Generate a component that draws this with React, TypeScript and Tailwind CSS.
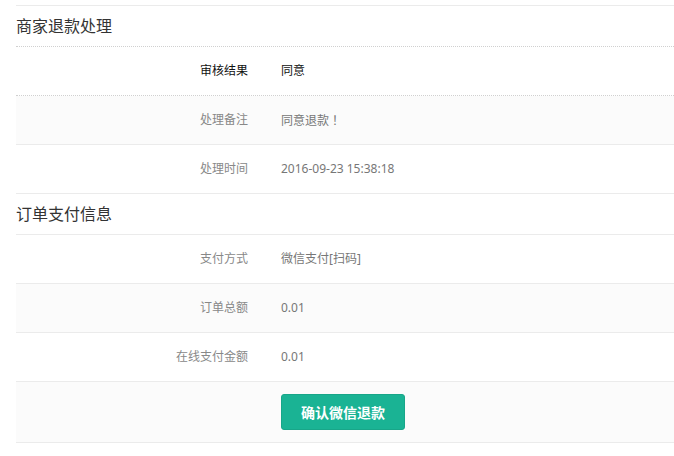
const refundRows = [
  { label: "审核结果", value: "同意", strong: true, border: "border-dotted border-[#d0d0d0]" },
  { label: "处理备注", value: "同意退款！", border: "border-solid border-[#ebebeb]" },
  { label: "处理时间", value: "2016-09-23 15:38:18", border: "border-solid border-[#ebebeb]" },
];

const payRows = [
  { label: "支付方式", value: "微信支付[扫码]" },
  { label: "订单总额", value: "0.01" },
  { label: "在线支付金额", value: "0.01" },
];

function Row({ label, value, strong, border, shaded }: { label: string; value: string; strong?: boolean; border?: string; shaded?: boolean }) {
  return (
    <div className={`flex h-[49px] items-center border-b text-[12px] ${border ?? "border-solid border-[#ebebeb]"} ${shaded ? "bg-[#fbfbfb]" : "bg-white"}`}>
      <div className={`w-[232px] shrink-0 text-right ${strong ? "text-[#111]" : "text-[#888]"}`}>{label}</div>
      <div className={`ml-[33px] ${strong ? "text-[#111]" : "text-[#777]"}`}>
        {/* full-width ！ sits centred in the TC face */}
        {value.endsWith("！") ? (
          <>
            {value.slice(0, -1)}
            <span className="font-['Noto_Sans_CJK_TC',sans-serif]">！</span>
          </>
        ) : (
          value
        )}
      </div>
    </div>
  );
}

export default function App() {
  return (
    <div className="min-h-[456px] bg-white pl-4 pt-[5px] font-['Noto_Sans','Noto_Sans_CJK_SC',sans-serif]">
      {/* 商家退款处理 */}
      <div className="flex h-[42px] items-center border-y border-t-[#ebebeb] border-b-[#d0d0d0] text-[16px] text-[#333]" style={{ borderTopStyle: "solid", borderBottomStyle: "dotted" }}>
        商家退款处理
      </div>
      {refundRows.map((r, i) => (
        <Row key={r.label} label={r.label} value={r.value} strong={r.strong} border={r.border} shaded={i % 2 === 1} />
      ))}

      {/* 订单支付信息 */}
      <div className="flex h-[41px] items-center border-b border-[#ebebeb] text-[16px] text-[#333]">
        订单支付信息
      </div>
      {payRows.map((r, i) => (
        <Row key={r.label} label={r.label} value={r.value} shaded={i % 2 === 1} />
      ))}
      <div className="flex h-[61px] items-center border-b border-[#ebebeb] bg-[#fbfbfb]">
        <div className="w-[232px] shrink-0" />
        <button className="ml-[33px] h-[36px] w-[124px] rounded-[3px] border border-[#18a689] bg-[#1ab394] text-[14px] font-bold text-white">
          确认微信退款
        </button>
      </div>
    </div>
  );
}
